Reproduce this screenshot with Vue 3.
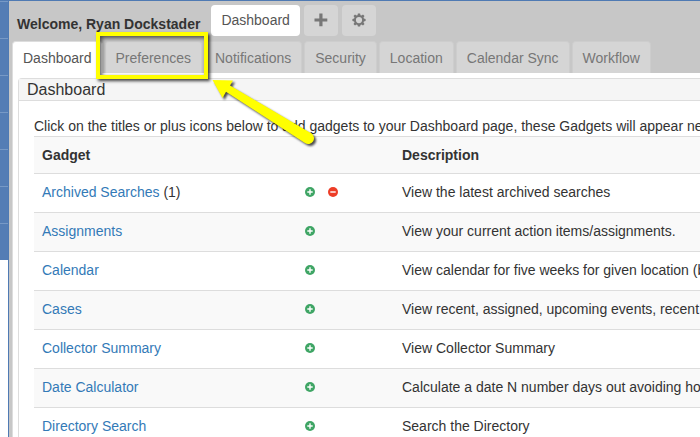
<script setup>
import { ref } from 'vue'

const tabs = ['Dashboard', 'Preferences', 'Notifications', 'Security', 'Location', 'Calendar Sync', 'Workflow']
const active = ref('Dashboard')

const gadgets = [
  { name: 'Archived Searches', count: 1, description: 'View the latest archived searches' },
  { name: 'Assignments', description: 'View your current action items/assignments.' },
  { name: 'Calendar', description: 'View calendar for five weeks for given location (b' },
  { name: 'Cases', description: 'View recent, assigned, upcoming events, recent' },
  { name: 'Collector Summary', description: 'View Collector Summary' },
  { name: 'Date Calculator', description: 'Calculate a date N number days out avoiding ho' },
  { name: 'Directory Search', description: 'Search the Directory' }
]
</script>

<template>
  <div class="shell">
    <aside class="rail">
      <div class="rail-menu">
        <span v-for="n in 7" :key="n" class="rail-item"></span>
      </div>
    </aside>
    <main class="page">
      <header class="topbar">
        <strong class="welcome">Welcome, Ryan Dockstader</strong>
        <nav class="pills">
          <button type="button" class="pill current">Dashboard</button>
          <button type="button" class="pill icon" aria-label="Add">
            <svg width="14" height="14" viewBox="0 0 14 14"><path d="M5.3 .6h3.2v4.8h4.8v3.1H8.5v4.8H5.3V8.5H.5V5.4h4.8z" /></svg>
          </button>
          <button type="button" class="pill icon" aria-label="Settings">
            <svg width="14" height="14" viewBox="0 0 14 14">
              <path fill-rule="evenodd" d="M5.9.4h2.2l.4 1.8 1 .4 1.5-1 1.5 1.5-1 1.5.4 1 1.7.4v2.1l-1.7.4-.4 1 1 1.5-1.5 1.5-1.5-1-1 .4-.4 1.7H5.9l-.4-1.7-1-.4-1.5 1-1.5-1.5 1-1.5-.4-1L.4 8.1V6l1.7-.4.4-1-1-1.5L3 1.6l1.5 1 1-.4zM7 4a3.1 3.1 0 1 0 0 6.2A3.1 3.1 0 0 0 7 4z" />
            </svg>
          </button>
        </nav>
      </header>
      <nav class="tabs">
        <button
          v-for="tab in tabs"
          :key="tab"
          type="button"
          class="tab"
          :class="{ active: tab === active, marked: tab === 'Preferences' }"
          @click="active = tab"
        >
          {{ tab }}
          <template v-if="tab === 'Preferences'">
            <span class="marker"></span>
            <svg class="pointer" width="112" height="76" viewBox="0 0 112 76" aria-hidden="true">
              <path d="M3.5 4L24 4.5L21 9.5L102.5 57.5A5.2 5.2 0 0 1 96 67L17 15.8L13.5 22Z" />
            </svg>
          </template>
        </button>
      </nav>
      <section class="content">
        <div class="panel">
          <h1 class="panel-title">Dashboard</h1>
          <div class="panel-body">
            <p class="intro">Click on the titles or plus icons below to add gadgets to your Dashboard page, these Gadgets will appear ne</p>
            <table class="gadgets">
              <thead>
                <tr>
                  <th class="col-name" scope="col">Gadget</th>
                  <th class="col-actions"></th>
                  <th scope="col">Description</th>
                </tr>
              </thead>
              <tbody>
                <tr v-for="gadget in gadgets" :key="gadget.name">
                  <td><a href="#">{{ gadget.name }}</a><template v-if="gadget.count"> ({{ gadget.count }})</template></td>
                  <td>
                    <div class="actions">
                      <button type="button" class="action add" :aria-label="'Add ' + gadget.name">
                        <svg width="10" height="10" viewBox="0 0 10 10"><circle cx="5" cy="5" r="5" /><path d="M5 2.3v5.4M2.3 5h5.4" /></svg>
                      </button>
                      <button v-if="gadget.count" type="button" class="action remove" :aria-label="'Remove ' + gadget.name">
                        <svg width="10" height="10" viewBox="0 0 10 10"><circle cx="5" cy="5" r="5" /><path d="M2.3 5h5.4" /></svg>
                      </button>
                    </div>
                  </td>
                  <td>{{ gadget.description }}</td>
                </tr>
              </tbody>
            </table>
          </div>
        </div>
      </section>
    </main>
  </div>
</template>

<style>
body {
  margin: 0;
  background: #fff;
}
</style>

<style scoped>
.shell {
  display: flex;
  box-sizing: border-box;
  height: 100vh;
  overflow: hidden;
  border-top: 1px solid #4f7ab3;
  font-family: "Liberation Sans", Arial, sans-serif;
  font-size: 14px;
  line-height: 20px;
  color: #333;
}
button {
  margin: 0;
  font: inherit;
  cursor: pointer;
}
svg {
  display: block;
}
.rail {
  flex: 0 0 8px;
  border-right: 1px solid #4f7ab3;
}
.rail-menu {
  display: flex;
  flex-direction: column;
  background: #547db5;
}
.rail-item {
  height: 36px;
  border-top: 1px solid #7799c6;
}
.page {
  flex: 1;
  min-width: 0;
  display: flex;
  flex-direction: column;
  padding-left: 3px;
  background: #c7c7c7;
}
.topbar {
  display: flex;
  align-items: flex-start;
  padding: 4px 0 5px 5px;
}
.welcome {
  padding-top: 9px;
  white-space: nowrap;
}
.pills {
  display: flex;
  gap: 4px;
  margin-left: 11px;
}
.pill {
  height: 31px;
  padding: 0 10px 2px;
  border: 0;
  border-radius: 4px;
  background: #d5d5d5;
  color: #777;
}
.pill.current {
  background: #fff;
  color: #555;
}
.pill.icon {
  width: 34px;
}
.pill svg {
  fill: #777;
}
.tabs {
  display: flex;
  gap: 2px;
}
.tab {
  position: relative;
  height: 32px;
  padding: 0 10px;
  border: 1px solid #cdcdcd;
  border-bottom: 0;
  border-radius: 4px 4px 0 0;
  background: #d5d5d5;
  color: #777;
  white-space: nowrap;
}
.tab.active {
  border-color: #ddd;
  background: #fff;
  color: #555;
}
.tab.marked {
  z-index: 1;
}
.marker {
  position: absolute;
  inset: -10px -7px -6px -10px;
  border: 4px solid #ff0;
  box-shadow: 2px 2px 3px rgba(0, 0, 0, 0.75), inset 2px 2px 4px rgba(0, 0, 0, 0.65);
}
.pointer {
  position: absolute;
  top: 34px;
  left: 103px;
  fill: #ff0;
  filter: drop-shadow(2px 2px 1px rgba(0, 0, 0, 0.7));
}
.content {
  flex: 1;
  min-height: 0;
  padding: 5px 0 0 5px;
  border-left: 1px solid #ddd;
  background: #fff;
}
.panel {
  border: 1px solid #ddd;
  border-right: 0;
  border-radius: 4px 0 0 0;
}
.panel-title {
  margin: 0;
  padding: 0 8px;
  border-bottom: 1px solid #ddd;
  background: #f5f5f5;
  font-size: 16px;
  font-weight: 400;
  line-height: 21px;
}
.panel-body {
  padding: 15px 0 0 15px;
}
.intro {
  margin: 0;
  white-space: nowrap;
}
.gadgets {
  width: 100%;
  table-layout: fixed;
  border-collapse: separate;
  border-spacing: 0;
}
.col-name {
  width: 255px;
}
.col-actions {
  width: 105px;
}
th,
td {
  box-sizing: border-box;
  padding: 8px;
  border-top: 1px solid #ddd;
  text-align: left;
  white-space: nowrap;
}
td {
  padding: 8px 8px 10px;
}
thead tr,
tbody tr:nth-child(even) {
  background: #f9f9f9;
}
a {
  color: #337ab7;
  text-decoration: none;
}
.actions {
  display: flex;
  gap: 13px;
  padding-left: 8px;
}
.action {
  padding: 0;
  border: 0;
  background: none;
}
.action path {
  stroke: #fff;
  stroke-width: 1.4;
}
.add circle {
  fill: #3fa565;
}
.remove circle {
  fill: #ed3d27;
}
</style>
